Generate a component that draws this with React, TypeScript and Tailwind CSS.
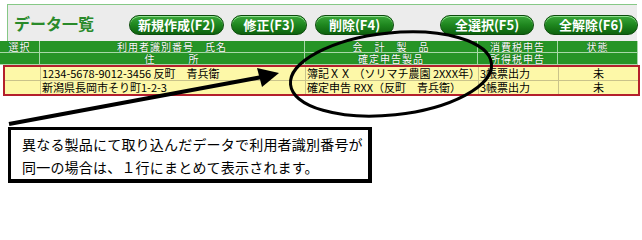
const font = { fontFamily: '"Noto Sans CJK JP", "Noto Sans", sans-serif' }

const buttons = [
  { label: "新規作成(F2)", w: "w-[95px]", ml: "ml-[35px]" },
  { label: "修正(F3)", w: "w-[76px]", ml: "ml-[7px]" },
  { label: "削除(F4)", w: "w-[79px]", ml: "ml-[8px]" },
  { label: "全選択(F5)", w: "w-[94px]", ml: "ml-[46px]" },
  { label: "全解除(F6)", w: "w-[94px]", ml: "ml-[10px]" },
]

const rows = [
  ["", "1234-5678-9012-3456 反町　青兵衛", "簿記ＸＸ （ソリマチ農園 2XXX年）", "3帳票出力", "未"],
  ["", "新潟県長岡市そり町1-2-3", "確定申告 RXX（反町　青兵衛）", "3帳票出力", "未"],
]

function HeadCell({ children, className = "" }: { children?: React.ReactNode; className?: string }) {
  return (
    <div
      className={`h-[12px] flex items-center justify-center whitespace-nowrap border-r border-b border-[#a8d8a8] bg-[#269426] text-white text-[10px] leading-none tracking-[1px] [text-shadow:0_0_1px_#0a3a0a] ${className}`}
    >
      {children}
    </div>
  )
}

export default function App() {
  return (
    <div className="relative w-[642px] h-[202px] bg-white overflow-hidden text-black" style={font}>
      <div className="ml-[7px] mt-[4px] w-[630px] h-[37px] border-l border-t border-[#86c886] bg-[#ececec] flex items-center">
        <span className="ml-[6px] shrink-0 whitespace-nowrap text-[16px] font-bold text-[#2a8a2a] leading-none">
          データ一覧
        </span>
        {buttons.map((b) => (
          <div
            key={b.label}
            className={`${b.ml} ${b.w} shrink-0 whitespace-nowrap h-[20px] mt-[3px] rounded-full bg-gradient-to-b from-[#3aa83a] via-[#1e861e] to-[#0e620e] border border-[#0c4c0c] shadow-[inset_0_1px_0_#8fe08f] flex items-center justify-center text-white text-[13px] font-bold leading-none`}
          >
            {b.label}
          </div>
        ))}
      </div>

      <div className="grid grid-cols-[40px_265px_173px_80px_80px] w-[638px]">
        <HeadCell>選択</HeadCell>
        <HeadCell>利用者識別番号　氏名</HeadCell>
        <HeadCell>会　計　製　品</HeadCell>
        <HeadCell>消費税申告</HeadCell>
        <HeadCell>状態</HeadCell>
        <HeadCell />
        <HeadCell>住　　　所</HeadCell>
        <HeadCell>確定申告製品</HeadCell>
        <HeadCell>所得税申告</HeadCell>
        <HeadCell />
      </div>

      <div className="ml-[3px] w-[637px] border-2 border-[#b4202c] grid grid-cols-[36px_265px_173px_80px_79px] bg-[#fdf8a8]">
        {rows.map((r, i) =>
          r.map((c, j) => (
            <div
              key={`${i}-${j}`}
              className={`h-[13px] flex items-center px-[1px] text-[11px] leading-none whitespace-nowrap border-r border-[#c9c38a] ${i === 0 ? "h-[14px] border-b" : ""} ${j === 4 ? "justify-center border-r-0" : ""}`}
            >
              {c}
            </div>
          ))
        )}
      </div>

      <div className="ml-[8px] mt-[31px] w-[364px] h-[56px] border-l-[3px] border-t-[3px] border-r-[4px] border-b-[4px] border-black bg-white pl-[11px] pt-[3px] text-[14px] leading-[23px] tracking-[0.2px]">
        <div>異なる製品にて取り込んだデータで利用者識別番号が</div>
        <div>同一の場合は、１行にまとめて表示されます。</div>
      </div>

      <svg className="absolute inset-0 pointer-events-none" width="642" height="202" viewBox="0 0 642 202">
        <ellipse cx="391" cy="74" rx="101" ry="41" transform="rotate(-6 391 74)" fill="none" stroke="black" strokeWidth="3" />
        <line x1="9" y1="124" x2="262" y2="77" stroke="black" strokeWidth="4" />
        <polygon points="279,73 257,68 262,87" fill="black" />
      </svg>
    </div>
  )
}
